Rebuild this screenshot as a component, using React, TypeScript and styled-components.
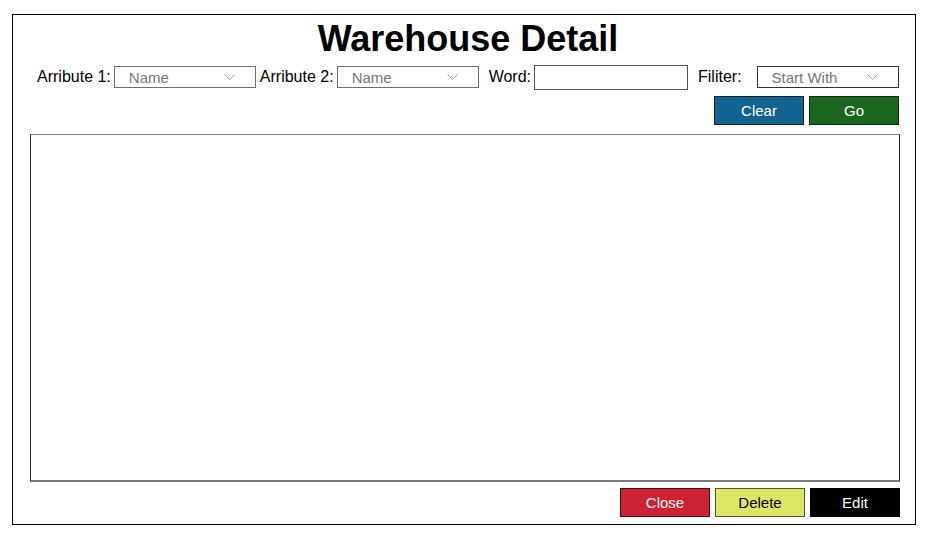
import styled, { createGlobalStyle } from 'styled-components';

const GlobalStyle = createGlobalStyle`
  html, body {
    margin: 0;
    padding: 0;
    background: #ffffff;
    font-family: 'Liberation Sans', Arial, sans-serif;
    color: #000000;
  }
`;

const Frame = styled.div`
  box-sizing: border-box;
  width: 904px;
  height: 511px;
  margin: 14px 0 0 12px;
  border: 1px solid #000000;
  padding: 4px 15px 0 17px;
  display: flex;
  flex-direction: column;
`;

const Title = styled.h1`
  margin: 0;
  font-size: 36px;
  line-height: 40px;
  font-weight: bold;
  text-align: center;
  padding-left: 6px;
`;

const FilterRow = styled.div`
  display: flex;
  align-items: center;
  height: 24px;
  margin-top: 6px;
`;

const Field = styled.div<{ $gap: number }>`
  display: flex;
  align-items: center;
  margin-left: ${(p) => p.$gap}px;
`;

const Label = styled.span<{ $space: number }>`
  font-size: 16px;
  margin-right: ${(p) => p.$space}px;
  white-space: nowrap;
`;

const SelectBox = styled.div<{ $dark?: boolean }>`
  box-sizing: border-box;
  width: 142px;
  height: 22px;
  border: 1px solid ${(p) => (p.$dark ? '#333333' : '#6e6e6e')};
  display: flex;
  align-items: center;
  justify-content: space-between;
  padding: 0 20px 0 14px;
  font-size: 15px;
  color: #777777;
`;

const WordInput = styled.input`
  box-sizing: border-box;
  width: 154px;
  height: 25px;
  border: 1px solid #555555;
  padding: 0 4px;
  font-size: 15px;
  font-family: inherit;
  outline: none;
`;

const ButtonRow = styled.div<{ $top: number; $right: number }>`
  display: flex;
  justify-content: flex-end;
  gap: 5px;
  margin-top: ${(p) => p.$top}px;
  padding-right: ${(p) => p.$right}px;
`;

const ActionButton = styled.button<{ $bg: string; $fg: string; $edge: string }>`
  box-sizing: border-box;
  width: 90px;
  height: 29px;
  background: ${(p) => p.$bg};
  color: ${(p) => p.$fg};
  border: 1px solid ${(p) => p.$edge};
  font-family: inherit;
  font-size: 15px;
  padding: 0;
  cursor: pointer;
`;

const ResultArea = styled.div`
  box-sizing: border-box;
  height: 348px;
  margin-top: 9px;
  border-top: 1px solid #7a7a7a;
  border-bottom: 2px solid #7a7a7a;
  border-left: 1px solid #2a2a2a;
  border-right: 1px solid #2a2a2a;
`;

const Chevron = () => (
  <svg width="11" height="7" viewBox="0 0 11 7">
    <polyline points="0.5,0.5 5.5,5.5 10.5,0.5" fill="none" stroke="#a0a0a0" strokeWidth="1" />
  </svg>
);

const Select = ({ value, dark }: { value: string; dark?: boolean }) => (
  <SelectBox $dark={dark}>
    <span>{value}</span>
    <Chevron />
  </SelectBox>
);

export default function App() {
  return (
    <>
      <GlobalStyle />
      <Frame>
        <Title>Warehouse Detail</Title>
        <FilterRow>
          <Field $gap={7}>
            <Label $space={3}>Arribute 1:</Label>
            <Select value="Name" />
          </Field>
          <Field $gap={4}>
            <Label $space={3}>Arribute 2:</Label>
            <Select value="Name" />
          </Field>
          <Field $gap={10}>
            <Label $space={3}>Word:</Label>
            <WordInput />
          </Field>
          <Field $gap={10}>
            <Label $space={15}>Filiter:</Label>
            <Select value="Start With" dark />
          </Field>
        </FilterRow>
        <ButtonRow $top={7} $right={1}>
          <ActionButton $bg="#11648f" $fg="#ffffff" $edge="#0b2230">
            Clear
          </ActionButton>
          <ActionButton $bg="#1b661f" $fg="#ffffff" $edge="#0c2a0e">
            Go
          </ActionButton>
        </ButtonRow>
        <ResultArea />
        <ButtonRow $top={6} $right={0}>
          <ActionButton $bg="#cd2232" $fg="#ffffff" $edge="#4a1015">
            Close
          </ActionButton>
          <ActionButton $bg="#dce865" $fg="#000000" $edge="#55582a">
            Delete
          </ActionButton>
          <ActionButton $bg="#000000" $fg="#ffffff" $edge="#000000">
            Edit
          </ActionButton>
        </ButtonRow>
      </Frame>
    </>
  );
}
